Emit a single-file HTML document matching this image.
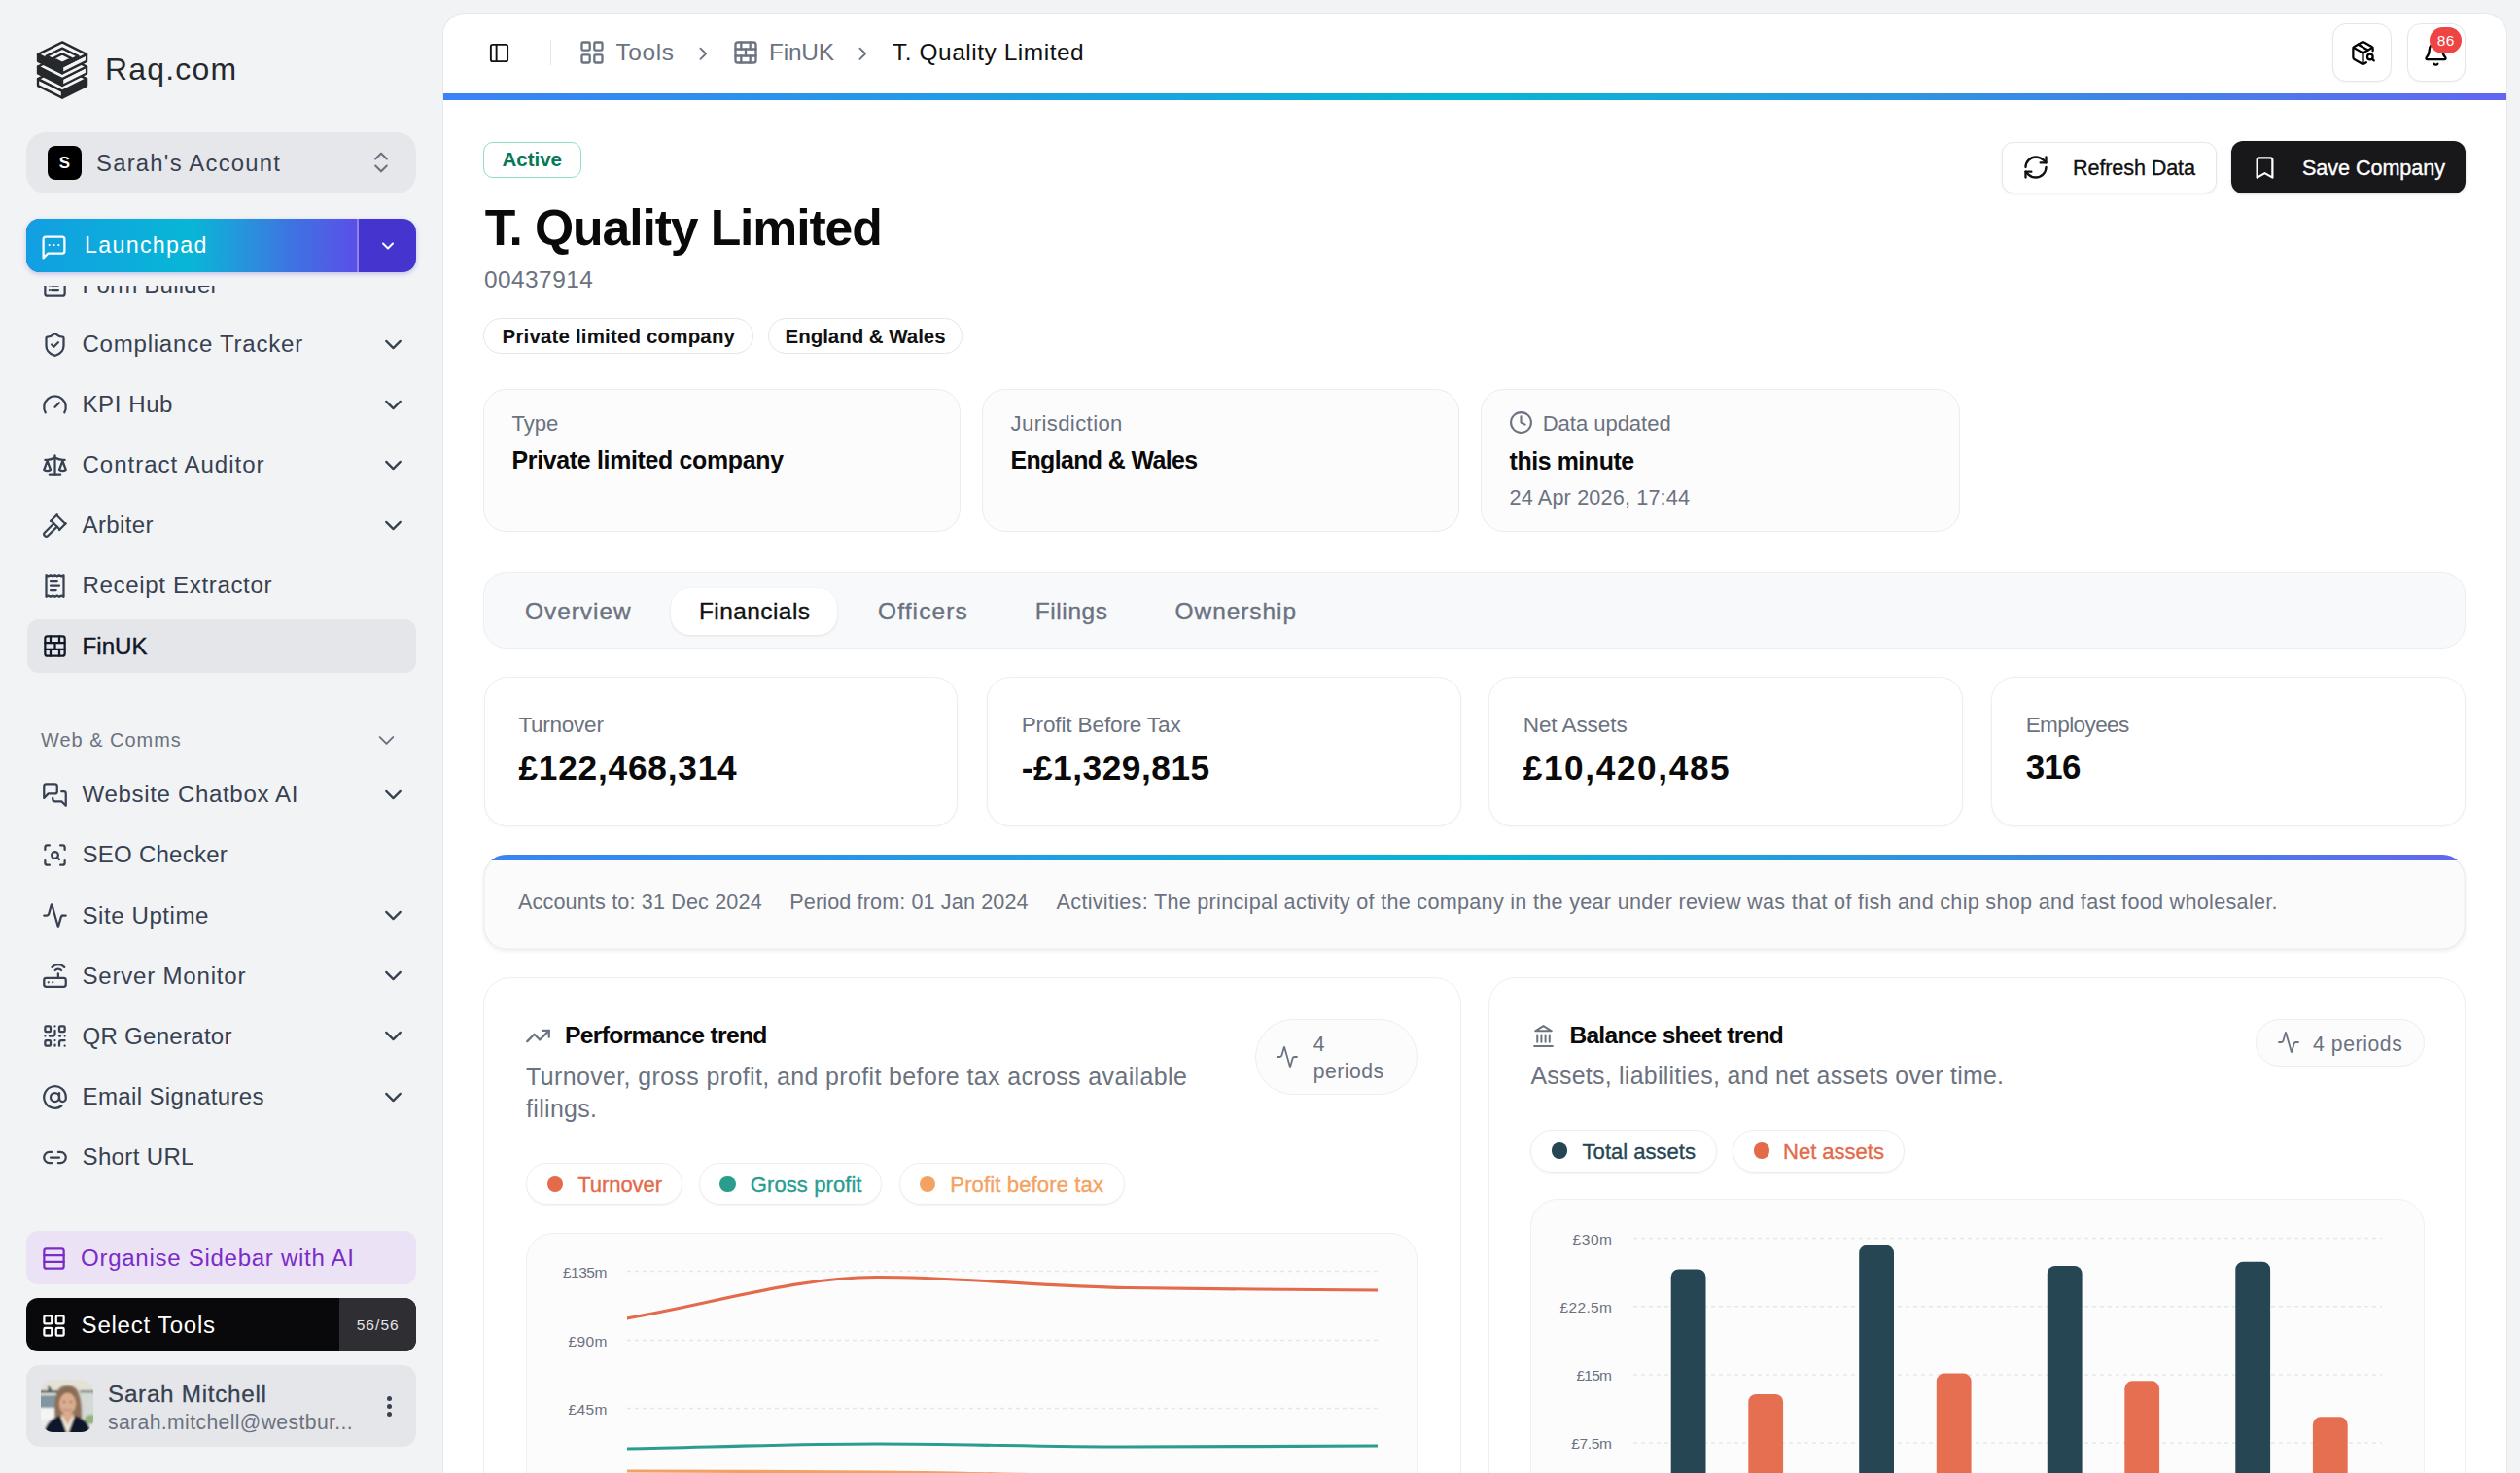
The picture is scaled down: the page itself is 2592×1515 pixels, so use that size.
<!DOCTYPE html>
<html><head><meta charset="utf-8"><style>
html,body{margin:0;padding:0;width:2592px;height:1515px;overflow:hidden;background:#f2f3f5;font-family:"Liberation Sans", sans-serif;}
body{position:relative;}

</style></head><body>
<svg style="position:absolute;left:30px;top:36px;" width="70" height="72" viewBox="0 0 70 72"><polygon points="8.999999999999996,45.099999999999994 34.05,57.599999999999994 34.05,64.6 8.999999999999996,52.099999999999994" fill="#f2f3f5" stroke="#25292c" stroke-width="2.3" stroke-linejoin="round"/><polygon points="34.05,57.599999999999994 59.099999999999994,45.099999999999994 59.099999999999994,52.099999999999994 34.05,64.6" fill="#25292c" stroke="#25292c" stroke-width="2.3" stroke-linejoin="round"/><polygon points="34.05,32.6 59.099999999999994,45.099999999999994 34.05,57.599999999999994 8.999999999999996,45.099999999999994" fill="#f2f3f5" stroke="#25292c" stroke-width="2.3" stroke-linejoin="round"/><polygon points="8.999999999999996,32.5 34.05,45.0 34.05,52.0 8.999999999999996,39.5" fill="#25292c" stroke="#25292c" stroke-width="2.3" stroke-linejoin="round"/><polygon points="34.05,45.0 59.099999999999994,32.5 59.099999999999994,39.5 34.05,52.0" fill="#f2f3f5" stroke="#25292c" stroke-width="2.3" stroke-linejoin="round"/><polygon points="34.05,20.0 59.099999999999994,32.5 34.05,45.0 8.999999999999996,32.5" fill="#f2f3f5" stroke="#25292c" stroke-width="2.3" stroke-linejoin="round"/><polygon points="8.999999999999996,19.9 34.05,32.4 34.05,39.4 8.999999999999996,26.9" fill="#25292c" stroke="#25292c" stroke-width="2.3" stroke-linejoin="round"/><polygon points="34.05,32.4 59.099999999999994,19.9 59.099999999999994,26.9 34.05,39.4" fill="#f2f3f5" stroke="#25292c" stroke-width="2.3" stroke-linejoin="round"/><polygon points="34.05,7.4 59.099999999999994,19.9 34.05,32.4 8.999999999999996,19.9" fill="#f2f3f5" stroke="#25292c" stroke-width="2.3" stroke-linejoin="round"/><polygon points="34.05,13.649999999999999 50.583,21.9 34.05,30.15 17.516999999999996,21.9" fill="none" stroke="#25292c" stroke-width="2.3" stroke-linejoin="round"/><polygon points="17.516999999999996,21.9 34.05,30.15 34.05,28.849999999999998 24.531,24.099999999999998" fill="#25292c" stroke="#25292c" stroke-width="1.5" stroke-linejoin="round"/><polygon points="34.05,19.349999999999998 43.568999999999996,24.099999999999998 34.05,28.849999999999998 24.531,24.099999999999998" fill="#f2f3f5" stroke="#25292c" stroke-width="2.3" stroke-linejoin="round"/></svg>
<div style="position:absolute;left:108.00px;top:55.64px;font-size:31.96px;line-height:31.96px;font-weight:400;color:#25292c;letter-spacing:1.190px;white-space:pre;">Raq.com</div>
<div style="position:absolute;left:27px;top:136px;width:401px;height:63px;background:#e6e7eb;border-radius:20px;"></div>
<div style="position:absolute;left:49px;top:150px;width:35px;height:35px;background:#000;border-radius:8px;"></div>
<div style="position:absolute;left:60.86px;top:159.67px;font-size:16.92px;line-height:16.92px;font-weight:700;color:#fff;letter-spacing:0.000px;white-space:pre;">S</div>
<div style="position:absolute;left:99.00px;top:155.78px;font-size:23.88px;line-height:23.88px;font-weight:400;color:#374151;letter-spacing:1.229px;white-space:pre;">Sarah&#39;s Account</div>
<svg style="position:absolute;left:378.00px;top:153.00px" width="28" height="28" viewBox="0 0 24 24" fill="none" stroke="#6b7280" stroke-width="1.8" stroke-linecap="round" stroke-linejoin="round"><path d="m7 15 5 5 5-5"/><path d="m7 9 5-5 5 5"/></svg>
<div style="position:absolute;left:27px;top:225px;width:401px;height:55px;border-radius:14px;overflow:hidden;background:#4535cf;box-shadow:0 2px 5px rgba(60,70,200,0.28);"><div style="position:absolute;left:0;top:0;width:340px;height:55px;background:linear-gradient(90deg,#129fe2 0%,#08b6d6 50%,#2596dc 65%,#3d74e2 80%,#5a4fe8 100%)"></div><div style="position:absolute;left:340px;top:0;width:1.5px;height:55px;background:rgba(255,255,255,0.4)"></div></div>
<svg style="position:absolute;left:41.00px;top:239.50px" width="29" height="29" viewBox="0 0 24 24" fill="none" stroke="#fff" stroke-width="1.9" stroke-linecap="round" stroke-linejoin="round"><path d="M21 15a2 2 0 0 1-2 2H7l-4 4V5a2 2 0 0 1 2-2h14a2 2 0 0 1 2 2z"/><path d="M8 10h.01"/><path d="M12 10h.01"/><path d="M16 10h.01"/></svg>
<div style="position:absolute;left:87.00px;top:241.34px;font-size:23.22px;line-height:23.22px;font-weight:400;color:#fff;letter-spacing:1.322px;white-space:pre;">Launchpad</div>
<svg style="position:absolute;left:389.00px;top:243.00px" width="20" height="20" viewBox="0 0 24 24" fill="none" stroke="#fff" stroke-width="2.4" stroke-linecap="round" stroke-linejoin="round"><path d="m6 9 6 6 6-6"/></svg>
<div style="position:absolute;left:0;top:293.5px;width:455px;height:936.5px;overflow:hidden">
<svg style="position:absolute;left:43.00px;top:-14.00px" width="27" height="27" viewBox="0 0 24 24" fill="none" stroke="#374151" stroke-width="2" stroke-linecap="round" stroke-linejoin="round"><rect width="18" height="18" x="3" y="3" rx="2"/><path d="M9 12h6"/><path d="M7 12h.01"/><path d="M7 16h.01"/><path d="M9 16h6"/></svg>
<div style="position:absolute;left:84.50px;top:-12.27px;font-size:24.06px;line-height:24.06px;font-weight:400;color:#374151;letter-spacing:0.214px;white-space:pre;">Form Builder</div>
<svg style="position:absolute;left:43.00px;top:47.00px" width="27" height="27" viewBox="0 0 24 24" fill="none" stroke="#374151" stroke-width="2" stroke-linecap="round" stroke-linejoin="round"><path d="M20 13c0 5-3.5 7.5-7.66 8.95a1 1 0 0 1-.67-.01C7.5 20.5 4 18 4 13V6a1 1 0 0 1 1-1c2 0 4.5-1.2 6.24-2.72a1.17 1.17 0 0 1 1.52 0C14.51 3.81 17 5 19 5a1 1 0 0 1 1 1z"/><path d="m9 12 2 2 4-4"/></svg>
<div style="position:absolute;left:84.50px;top:48.73px;font-size:24.06px;line-height:24.06px;font-weight:400;color:#374151;letter-spacing:0.757px;white-space:pre;">Compliance Tracker</div>
<svg style="position:absolute;left:390.00px;top:46.00px" width="29" height="29" viewBox="0 0 24 24" fill="none" stroke="#374151" stroke-width="1.9" stroke-linecap="round" stroke-linejoin="round"><path d="m6 9 6 6 6-6"/></svg>
<svg style="position:absolute;left:43.00px;top:109.00px" width="27" height="27" viewBox="0 0 24 24" fill="none" stroke="#374151" stroke-width="2" stroke-linecap="round" stroke-linejoin="round"><path d="m12 14 4-4"/><path d="M3.34 19a10 10 0 1 1 17.32 0"/></svg>
<div style="position:absolute;left:84.50px;top:110.73px;font-size:24.06px;line-height:24.06px;font-weight:400;color:#374151;letter-spacing:0.573px;white-space:pre;">KPI Hub</div>
<svg style="position:absolute;left:390.00px;top:108.00px" width="29" height="29" viewBox="0 0 24 24" fill="none" stroke="#374151" stroke-width="1.9" stroke-linecap="round" stroke-linejoin="round"><path d="m6 9 6 6 6-6"/></svg>
<svg style="position:absolute;left:43.00px;top:171.00px" width="27" height="27" viewBox="0 0 24 24" fill="none" stroke="#374151" stroke-width="2" stroke-linecap="round" stroke-linejoin="round"><path d="m16 16 3-8 3 8c-.87.65-1.92 1-3 1s-2.13-.35-3-1Z"/><path d="m2 16 3-8 3 8c-.87.65-1.92 1-3 1s-2.13-.35-3-1Z"/><path d="M7 21h10"/><path d="M12 3v18"/><path d="M3 7h2c2 0 5-1 7-2 2 1 5 2 7 2h2"/></svg>
<div style="position:absolute;left:84.50px;top:172.73px;font-size:24.06px;line-height:24.06px;font-weight:400;color:#374151;letter-spacing:0.971px;white-space:pre;">Contract Auditor</div>
<svg style="position:absolute;left:390.00px;top:170.00px" width="29" height="29" viewBox="0 0 24 24" fill="none" stroke="#374151" stroke-width="1.9" stroke-linecap="round" stroke-linejoin="round"><path d="m6 9 6 6 6-6"/></svg>
<svg style="position:absolute;left:43.00px;top:233.00px" width="27" height="27" viewBox="0 0 24 24" fill="none" stroke="#374151" stroke-width="2" stroke-linecap="round" stroke-linejoin="round"><path d="m14 13-8.381 8.38a1 1 0 0 1-3.001-3l8.384-8.381"/><path d="m16 16 6-6"/><path d="m21.5 10.5-8-8"/><path d="m8 8 6-6"/><path d="m8.5 7.5 8 8"/></svg>
<div style="position:absolute;left:84.50px;top:234.73px;font-size:24.06px;line-height:24.06px;font-weight:400;color:#374151;letter-spacing:0.362px;white-space:pre;">Arbiter</div>
<svg style="position:absolute;left:390.00px;top:232.00px" width="29" height="29" viewBox="0 0 24 24" fill="none" stroke="#374151" stroke-width="1.9" stroke-linecap="round" stroke-linejoin="round"><path d="m6 9 6 6 6-6"/></svg>
<svg style="position:absolute;left:43.00px;top:295.00px" width="27" height="27" viewBox="0 0 24 24" fill="none" stroke="#374151" stroke-width="2" stroke-linecap="round" stroke-linejoin="round"><path d="M4 2v20l2-1 2 1 2-1 2 1 2-1 2 1 2-1 2 1V2l-2 1-2-1-2 1-2-1-2 1-2-1-2 1Z"/><path d="M14 8H8"/><path d="M16 12H8"/><path d="M13 16H8"/></svg>
<div style="position:absolute;left:84.50px;top:296.73px;font-size:24.06px;line-height:24.06px;font-weight:400;color:#374151;letter-spacing:0.660px;white-space:pre;">Receipt Extractor</div>
<div style="position:absolute;left:27.5px;top:343.0px;width:400.5px;height:55px;background:#e5e6ea;border-radius:12px;"></div>
<svg style="position:absolute;left:43.00px;top:357.00px" width="27" height="27" viewBox="0 0 24 24" fill="none" stroke="#111827" stroke-width="2" stroke-linecap="round" stroke-linejoin="round"><rect width="18" height="18" x="3" y="3" rx="2"/><path d="M12 9v6"/><path d="M16 15v6"/><path d="M16 3v6"/><path d="M3 15h18"/><path d="M3 9h18"/><path d="M8 15v6"/><path d="M8 3v6"/></svg>
<div style="position:absolute;left:84.50px;top:359.73px;font-size:24.06px;line-height:24.06px;font-weight:400;color:#111827;letter-spacing:0.047px;white-space:pre;-webkit-text-stroke:0.4px currentColor;">FinUK</div>
<div style="position:absolute;left:42.00px;top:458.63px;font-size:19.93px;line-height:19.93px;font-weight:400;color:#6b7280;letter-spacing:1.012px;white-space:pre;">Web &amp; Comms</div>
<svg style="position:absolute;left:383.50px;top:454.50px" width="27" height="27" viewBox="0 0 24 24" fill="none" stroke="#6b7280" stroke-width="1.7" stroke-linecap="round" stroke-linejoin="round"><path d="m6 9 6 6 6-6"/></svg>
<svg style="position:absolute;left:43.00px;top:510.00px" width="27" height="27" viewBox="0 0 24 24" fill="none" stroke="#374151" stroke-width="2" stroke-linecap="round" stroke-linejoin="round"><path d="M14 9a2 2 0 0 1-2 2H6l-4 4V4a2 2 0 0 1 2-2h8a2 2 0 0 1 2 2z"/><path d="M18 9h2a2 2 0 0 1 2 2v11l-4-4h-6a2 2 0 0 1-2-2v-1"/></svg>
<div style="position:absolute;left:84.50px;top:511.73px;font-size:24.06px;line-height:24.06px;font-weight:400;color:#374151;letter-spacing:0.662px;white-space:pre;">Website Chatbox AI</div>
<svg style="position:absolute;left:390.00px;top:509.00px" width="29" height="29" viewBox="0 0 24 24" fill="none" stroke="#374151" stroke-width="1.9" stroke-linecap="round" stroke-linejoin="round"><path d="m6 9 6 6 6-6"/></svg>
<svg style="position:absolute;left:43.00px;top:572.20px" width="27" height="27" viewBox="0 0 24 24" fill="none" stroke="#374151" stroke-width="2" stroke-linecap="round" stroke-linejoin="round"><path d="M3 7V5a2 2 0 0 1 2-2h2"/><path d="M17 3h2a2 2 0 0 1 2 2v2"/><path d="M21 17v2a2 2 0 0 1-2 2h-2"/><path d="M7 21H5a2 2 0 0 1-2-2v-2"/><circle cx="12" cy="12" r="3"/><path d="m16 16-1.9-1.9"/></svg>
<div style="position:absolute;left:84.50px;top:573.93px;font-size:24.06px;line-height:24.06px;font-weight:400;color:#374151;letter-spacing:0.228px;white-space:pre;">SEO Checker</div>
<svg style="position:absolute;left:43.00px;top:634.40px" width="27" height="27" viewBox="0 0 24 24" fill="none" stroke="#374151" stroke-width="2" stroke-linecap="round" stroke-linejoin="round"><path d="M22 12h-2.48a2 2 0 0 0-1.93 1.46l-2.35 8.36a.25.25 0 0 1-.48 0L9.24 2.18a.25.25 0 0 0-.48 0l-2.35 8.36A2 2 0 0 1 4.49 12H2"/></svg>
<div style="position:absolute;left:84.50px;top:636.13px;font-size:24.06px;line-height:24.06px;font-weight:400;color:#374151;letter-spacing:0.570px;white-space:pre;">Site Uptime</div>
<svg style="position:absolute;left:390.00px;top:633.40px" width="29" height="29" viewBox="0 0 24 24" fill="none" stroke="#374151" stroke-width="1.9" stroke-linecap="round" stroke-linejoin="round"><path d="m6 9 6 6 6-6"/></svg>
<svg style="position:absolute;left:43.00px;top:696.60px" width="27" height="27" viewBox="0 0 24 24" fill="none" stroke="#374151" stroke-width="2" stroke-linecap="round" stroke-linejoin="round"><rect width="20" height="8" x="2" y="14" rx="2"/><path d="M6.01 18H6"/><path d="M10.01 18H10"/><path d="M15 10v4"/><path d="M17.84 7.17a4 4 0 0 0-5.66 0"/><path d="M20.66 4.34a8 8 0 0 0-11.31 0"/></svg>
<div style="position:absolute;left:84.50px;top:698.33px;font-size:24.06px;line-height:24.06px;font-weight:400;color:#374151;letter-spacing:0.792px;white-space:pre;">Server Monitor</div>
<svg style="position:absolute;left:390.00px;top:695.60px" width="29" height="29" viewBox="0 0 24 24" fill="none" stroke="#374151" stroke-width="1.9" stroke-linecap="round" stroke-linejoin="round"><path d="m6 9 6 6 6-6"/></svg>
<svg style="position:absolute;left:43.00px;top:758.80px" width="27" height="27" viewBox="0 0 24 24" fill="none" stroke="#374151" stroke-width="2" stroke-linecap="round" stroke-linejoin="round"><rect width="5" height="5" x="3" y="3" rx="1"/><rect width="5" height="5" x="16" y="3" rx="1"/><rect width="5" height="5" x="3" y="16" rx="1"/><path d="M21 16h-3a2 2 0 0 0-2 2v3"/><path d="M21 21v.01"/><path d="M12 7v3a2 2 0 0 1-2 2H7"/><path d="M3 12h.01"/><path d="M12 3h.01"/><path d="M12 16v.01"/><path d="M16 12h1"/><path d="M21 12v.01"/><path d="M12 21v-1"/></svg>
<div style="position:absolute;left:84.50px;top:760.53px;font-size:24.06px;line-height:24.06px;font-weight:400;color:#374151;letter-spacing:0.270px;white-space:pre;">QR Generator</div>
<svg style="position:absolute;left:390.00px;top:757.80px" width="29" height="29" viewBox="0 0 24 24" fill="none" stroke="#374151" stroke-width="1.9" stroke-linecap="round" stroke-linejoin="round"><path d="m6 9 6 6 6-6"/></svg>
<svg style="position:absolute;left:43.00px;top:821.00px" width="27" height="27" viewBox="0 0 24 24" fill="none" stroke="#374151" stroke-width="2" stroke-linecap="round" stroke-linejoin="round"><circle cx="12" cy="12" r="4"/><path d="M16 8v5a3 3 0 0 0 6 0v-1a10 10 0 1 0-4 8"/></svg>
<div style="position:absolute;left:84.50px;top:822.73px;font-size:24.06px;line-height:24.06px;font-weight:400;color:#374151;letter-spacing:0.348px;white-space:pre;">Email Signatures</div>
<svg style="position:absolute;left:390.00px;top:820.00px" width="29" height="29" viewBox="0 0 24 24" fill="none" stroke="#374151" stroke-width="1.9" stroke-linecap="round" stroke-linejoin="round"><path d="m6 9 6 6 6-6"/></svg>
<svg style="position:absolute;left:43.00px;top:883.20px" width="27" height="27" viewBox="0 0 24 24" fill="none" stroke="#374151" stroke-width="2" stroke-linecap="round" stroke-linejoin="round"><path d="M9 17H7A5 5 0 0 1 7 7h2"/><path d="M15 7h2a5 5 0 1 1 0 10h-2"/><line x1="8" x2="16" y1="12" y2="12"/></svg>
<div style="position:absolute;left:84.50px;top:884.93px;font-size:24.06px;line-height:24.06px;font-weight:400;color:#374151;letter-spacing:0.342px;white-space:pre;">Short URL</div>
</div>
<div style="position:absolute;left:27px;top:1266px;width:401px;height:55px;background:#ebe2f6;border-radius:12px;"></div>
<svg style="position:absolute;left:42.00px;top:1281.00px" width="27" height="27" viewBox="0 0 24 24" fill="none" stroke="#7b2cc8" stroke-width="2" stroke-linecap="round" stroke-linejoin="round"><rect width="18" height="18" x="3" y="3" rx="2"/><path d="M21 9H3"/><path d="M21 15H3"/></svg>
<div style="position:absolute;left:83.00px;top:1281.93px;font-size:24.06px;line-height:24.06px;font-weight:400;color:#7b2cc8;letter-spacing:0.711px;white-space:pre;">Organise Sidebar with AI</div>
<div style="position:absolute;left:27px;top:1335px;width:401px;height:55px;background:#09090b;border-radius:12px;overflow:hidden;"><div style="position:absolute;left:322px;top:0;width:79px;height:55px;background:#2e2e33"></div></div>
<svg style="position:absolute;left:42.00px;top:1350.00px" width="27" height="27" viewBox="0 0 24 24" fill="none" stroke="#fff" stroke-width="2" stroke-linecap="round" stroke-linejoin="round"><rect width="7" height="7" x="3" y="3" rx="1"/><rect width="7" height="7" x="14" y="3" rx="1"/><rect width="7" height="7" x="14" y="14" rx="1"/><rect width="7" height="7" x="3" y="14" rx="1"/></svg>
<div style="position:absolute;left:83.60px;top:1350.93px;font-size:24.06px;line-height:24.06px;font-weight:400;color:#fff;letter-spacing:0.744px;white-space:pre;">Select Tools</div>
<div style="position:absolute;left:366.70px;top:1354.57px;font-size:15.51px;line-height:15.51px;font-weight:400;color:#e4e4e7;letter-spacing:1.051px;white-space:pre;">56/56</div>
<div style="position:absolute;left:27px;top:1404px;width:401px;height:84px;background:#e5e6ea;border-radius:14px;"></div>
<svg style="position:absolute;left:42px;top:1419px;" width="54" height="54" viewBox="0 0 54 54"><defs><clipPath id="avc"><rect x="0" y="0" width="54" height="54" rx="12.5"/></clipPath><filter id="avb" x="-10%" y="-10%" width="120%" height="120%"><feGaussianBlur stdDeviation="0.9"/></filter></defs>
<g clip-path="url(#avc)"><g filter="url(#avb)">
<rect x="-2" y="-2" width="58" height="58" fill="#e9ece9"/>
<rect x="-2" y="-2" width="58" height="14" fill="#e4e2d8"/>
<rect x="-2" y="11" width="20" height="3" fill="#5e625c"/>
<rect x="40" y="11" width="16" height="2.5" fill="#7d837d"/>
<rect x="-2" y="16" width="18" height="13" fill="#8197a0"/>
<rect x="-2" y="29" width="18" height="12" fill="#f4f5f3"/>
<rect x="40" y="14" width="16" height="26" fill="#d3d9d4"/>
<ellipse cx="52" cy="41" rx="7" ry="5" fill="#93b47c"/>
<path d="M7 6 L10 8 L11 12 L8 12Z" fill="#333"/>
<path d="M15 42 C13 30 14 12 20 8 C24 5 31 5 35 8 C41 12 43 28 42 44 L37 46 L18 46Z" fill="#8d7158"/>
<ellipse cx="27.5" cy="24.5" rx="8.6" ry="11" fill="#dcae8f"/>
<path d="M19 22 C19 12 23 9 27.5 9 C33 9 36 13 36 22 C34 15 31 13.5 27.5 13.5 C23 13.5 21 16 19 22Z" fill="#866a52"/>
<path d="M23.5 30 C25.5 32 29.5 32 31.5 30" stroke="#b57b6c" stroke-width="1.2" fill="none"/>
<path d="M21 35 L34 35 L35 54 L20 54Z" fill="#d9ab8c"/>
<path d="M19 38 L36 38 L34 56 L21 56Z" fill="#efe8dc"/><path d="M22.5 37 L32.5 37 L27.5 47Z" fill="#d9ab8c"/><ellipse cx="24" cy="23" rx="1.3" ry="0.9" fill="#7a5646"/><ellipse cx="31" cy="23" rx="1.3" ry="0.9" fill="#7a5646"/>
<path d="M3 56 C5 44 12 39 20 37 L27 56 Z" fill="#111729"/>
<path d="M52 56 C50 44 43 39 35 37 L28 56 Z" fill="#111729"/>
</g></g></svg>
<div style="position:absolute;left:111.00px;top:1422.47px;font-size:24.25px;line-height:24.25px;font-weight:400;color:#374151;letter-spacing:0.719px;white-space:pre;-webkit-text-stroke:0.3px currentColor;">Sarah Mitchell</div>
<div style="position:absolute;left:111.00px;top:1452.39px;font-size:21.15px;line-height:21.15px;font-weight:400;color:#6b7280;letter-spacing:0.389px;white-space:pre;">sarah.mitchell@westbur...</div>
<div style="position:absolute;left:398px;top:1436px;width:5px;height:5px;background:#374151;border-radius:50%;"></div>
<div style="position:absolute;left:398px;top:1444px;width:5px;height:5px;background:#374151;border-radius:50%;"></div>
<div style="position:absolute;left:398px;top:1452px;width:5px;height:5px;background:#374151;border-radius:50%;"></div>
<div style="position:absolute;left:456px;top:13.5px;width:2122px;height:1560px;background:#fff;border-radius:22px;box-shadow:0 0 0 1px #e7e8eb;"></div>
<svg style="position:absolute;left:502.00px;top:43.00px" width="23" height="23" viewBox="0 0 24 24" fill="none" stroke="#111" stroke-width="2" stroke-linecap="round" stroke-linejoin="round"><rect width="18" height="18" x="3" y="3" rx="2"/><path d="M9 3v18"/></svg>
<div style="position:absolute;left:565.5px;top:41px;width:1.5px;height:26px;background:#e5e7eb;"></div>
<svg style="position:absolute;left:595.00px;top:40.00px" width="28" height="28" viewBox="0 0 24 24" fill="none" stroke="#6b7280" stroke-width="2" stroke-linecap="round" stroke-linejoin="round"><rect width="7" height="7" x="3" y="3" rx="1"/><rect width="7" height="7" x="14" y="3" rx="1"/><rect width="7" height="7" x="14" y="14" rx="1"/><rect width="7" height="7" x="3" y="14" rx="1"/></svg>
<div style="position:absolute;left:633.50px;top:42.31px;font-size:24.44px;line-height:24.44px;font-weight:400;color:#6b7280;letter-spacing:0.609px;white-space:pre;">Tools</div>
<svg style="position:absolute;left:711.75px;top:43.75px" width="22.5" height="22.5" viewBox="0 0 24 24" fill="none" stroke="#6b7280" stroke-width="2" stroke-linecap="round" stroke-linejoin="round"><path d="m9 18 6-6-6-6"/></svg>
<svg style="position:absolute;left:752.50px;top:40.00px" width="28" height="28" viewBox="0 0 24 24" fill="none" stroke="#6b7280" stroke-width="2" stroke-linecap="round" stroke-linejoin="round"><rect width="18" height="18" x="3" y="3" rx="2"/><path d="M12 9v6"/><path d="M16 15v6"/><path d="M16 3v6"/><path d="M3 15h18"/><path d="M3 9h18"/><path d="M8 15v6"/><path d="M8 3v6"/></svg>
<div style="position:absolute;left:791.00px;top:42.31px;font-size:24.44px;line-height:24.44px;font-weight:400;color:#6b7280;letter-spacing:-0.227px;white-space:pre;">FinUK</div>
<svg style="position:absolute;left:876.45px;top:43.75px" width="22.5" height="22.5" viewBox="0 0 24 24" fill="none" stroke="#6b7280" stroke-width="2" stroke-linecap="round" stroke-linejoin="round"><path d="m9 18 6-6-6-6"/></svg>
<div style="position:absolute;left:918.00px;top:42.31px;font-size:24.44px;line-height:24.44px;font-weight:400;color:#111;letter-spacing:0.546px;white-space:pre;">T. Quality Limited</div>
<div style="position:absolute;left:2399.3px;top:24.3px;width:60.5px;height:60.2px;box-sizing:border-box;border:1.5px solid #e4e6ea;border-radius:14px;background:#fff;box-shadow:0 1px 2px rgba(0,0,0,0.04);"></div>
<div style="position:absolute;left:2475.5px;top:24.3px;width:60.5px;height:60.2px;box-sizing:border-box;border:1.5px solid #e4e6ea;border-radius:14px;background:#fff;box-shadow:0 1px 2px rgba(0,0,0,0.04);"></div>
<svg style="position:absolute;left:2417.00px;top:41.00px" width="27" height="27" viewBox="0 0 24 24" fill="none" stroke="#000" stroke-width="2" stroke-linecap="round" stroke-linejoin="round"><path d="M21 10V8a2 2 0 0 0-1-1.73l-7-4a2 2 0 0 0-2 0l-7 4A2 2 0 0 0 3 8v8a2 2 0 0 0 1 1.73l7 4a2 2 0 0 0 2 0l2-1.14"/><path d="m7.5 4.27 9 5.15"/><polyline points="3.29 7 12 12 20.71 7"/><line x1="12" x2="12" y1="22" y2="12"/><circle cx="18.5" cy="15.5" r="2.5"/><path d="M20.27 17.27 22 19"/></svg>
<svg style="position:absolute;left:2491.90px;top:41.50px" width="27" height="27" viewBox="0 0 24 24" fill="none" stroke="#000" stroke-width="2" stroke-linecap="round" stroke-linejoin="round"><path d="M10.268 21a2 2 0 0 0 3.464 0"/><path d="M3.262 15.326A1 1 0 0 0 4 17h16a1 1 0 0 0 .74-1.673C19.41 13.956 18 12.499 18 8A6 6 0 0 0 6 8c0 4.499-1.411 5.956-2.738 7.326"/></svg>
<div style="position:absolute;left:2499.0px;top:28.199999999999996px;width:32.8px;height:27.2px;background:#ef4444;border-radius:14px;"></div>
<div style="position:absolute;left:2506.75px;top:34.47px;font-size:15.51px;line-height:15.51px;font-weight:400;color:#fff;letter-spacing:0.450px;white-space:pre;">86</div>
<div style="position:absolute;left:456px;top:96px;width:2122px;height:7px;background:linear-gradient(90deg,#3b82f6 0%,#06b6d4 50%,#6366f1 100%);"></div>
<div style="position:absolute;left:497px;top:145.7px;width:101px;height:37px;box-sizing:border-box;border:1.7px solid #8ee0c0;border-radius:10px;background:#fff;"></div>
<div style="position:absolute;left:516.60px;top:153.65px;font-size:20.49px;line-height:20.49px;font-weight:700;color:#047857;letter-spacing:-0.017px;white-space:pre;">Active</div>
<div style="position:absolute;left:498.75px;top:208.53px;font-size:51.7px;line-height:51.7px;font-weight:700;color:#0a0a0a;letter-spacing:-1.113px;white-space:pre;">T. Quality Limited</div>
<div style="position:absolute;left:497.90px;top:276.31px;font-size:24.44px;line-height:24.44px;font-weight:400;color:#6b7280;letter-spacing:0.467px;white-space:pre;">00437914</div>
<div style="position:absolute;left:497px;top:327px;width:277.6px;height:37px;box-sizing:border-box;border:1.5px solid #e3e5e9;border-radius:19px;"></div>
<div style="position:absolute;left:516.60px;top:335.65px;font-size:20.49px;line-height:20.49px;font-weight:700;color:#111;letter-spacing:0.170px;white-space:pre;">Private limited company</div>
<div style="position:absolute;left:789.8px;top:327px;width:200.7px;height:37px;box-sizing:border-box;border:1.5px solid #e3e5e9;border-radius:19px;"></div>
<div style="position:absolute;left:807.60px;top:335.65px;font-size:20.49px;line-height:20.49px;font-weight:700;color:#111;letter-spacing:-0.030px;white-space:pre;">England &amp; Wales</div>
<div style="position:absolute;left:2058.7px;top:145.5px;width:221.3px;height:53px;box-sizing:border-box;border:1.5px solid #e4e6ea;border-radius:12px;background:#fff;box-shadow:0 1px 3px rgba(0,0,0,0.06);"></div>
<svg style="position:absolute;left:2080.30px;top:158.30px" width="28" height="28" viewBox="0 0 24 24" fill="none" stroke="#111" stroke-width="2" stroke-linecap="round" stroke-linejoin="round"><path d="M3 12a9 9 0 0 1 9-9 9.75 9.75 0 0 1 6.74 2.74L21 8"/><path d="M21 3v5h-5"/><path d="M21 12a9 9 0 0 1-9 9 9.75 9.75 0 0 1-6.74-2.74L3 16"/><path d="M8 16H3v5"/></svg>
<div style="position:absolute;left:2132.00px;top:162.09px;font-size:21.62px;line-height:21.62px;font-weight:400;color:#111;letter-spacing:-0.121px;white-space:pre;-webkit-text-stroke:0.35px currentColor;">Refresh Data</div>
<div style="position:absolute;left:2294.8px;top:145px;width:241.7px;height:54px;border-radius:12px;background:#18181b;box-shadow:0 1px 3px rgba(0,0,0,0.15);"></div>
<svg style="position:absolute;left:2316.00px;top:158.50px" width="27" height="27" viewBox="0 0 24 24" fill="none" stroke="#fff" stroke-width="2" stroke-linecap="round" stroke-linejoin="round"><path d="m19 21-7-4-7 4V5a2 2 0 0 1 2-2h10a2 2 0 0 1 2 2v16z"/></svg>
<div style="position:absolute;left:2368.00px;top:162.09px;font-size:21.62px;line-height:21.62px;font-weight:400;color:#fff;letter-spacing:-0.068px;white-space:pre;-webkit-text-stroke:0.35px currentColor;">Save Company</div>
<div style="position:absolute;left:497px;top:399.5px;width:491px;height:147px;box-sizing:border-box;border:1.5px solid #eaecef;border-radius:24px;background:#fcfcfd;"></div>
<div style="position:absolute;left:526.50px;top:425.30px;font-size:22.09px;line-height:22.09px;font-weight:400;color:#6b7280;letter-spacing:-0.025px;white-space:pre;">Type</div>
<div style="position:absolute;left:526.50px;top:461.41px;font-size:24.91px;line-height:24.91px;font-weight:700;color:#0a0a0a;letter-spacing:-0.320px;white-space:pre;">Private limited company</div>
<div style="position:absolute;left:1010px;top:399.5px;width:491px;height:147px;box-sizing:border-box;border:1.5px solid #eaecef;border-radius:24px;background:#fcfcfd;"></div>
<div style="position:absolute;left:1039.50px;top:425.30px;font-size:22.09px;line-height:22.09px;font-weight:400;color:#6b7280;letter-spacing:0.406px;white-space:pre;">Jurisdiction</div>
<div style="position:absolute;left:1039.50px;top:461.41px;font-size:24.91px;line-height:24.91px;font-weight:700;color:#0a0a0a;letter-spacing:-0.609px;white-space:pre;">England &amp; Wales</div>
<div style="position:absolute;left:1523px;top:399.5px;width:492.7px;height:147px;box-sizing:border-box;border:1.5px solid #eaecef;border-radius:24px;background:#fcfcfd;"></div>
<svg style="position:absolute;left:1551.80px;top:422.00px" width="25" height="25" viewBox="0 0 24 24" fill="none" stroke="#6b7280" stroke-width="2" stroke-linecap="round" stroke-linejoin="round"><circle cx="12" cy="12" r="10"/><polyline points="12 6 12 12 16 14"/></svg>
<div style="position:absolute;left:1586.70px;top:425.30px;font-size:22.09px;line-height:22.09px;font-weight:400;color:#6b7280;letter-spacing:-0.053px;white-space:pre;">Data updated</div>
<div style="position:absolute;left:1552.50px;top:461.91px;font-size:24.91px;line-height:24.91px;font-weight:700;color:#0a0a0a;letter-spacing:-0.414px;white-space:pre;">this minute</div>
<div style="position:absolute;left:1552.50px;top:501.19px;font-size:21.62px;line-height:21.62px;font-weight:400;color:#6b7280;letter-spacing:0.168px;white-space:pre;">24 Apr 2026, 17:44</div>
<div style="position:absolute;left:497px;top:588px;width:2039px;height:79px;box-sizing:border-box;border:1.5px solid #eceef2;border-radius:24px;background:#f8f9fb;"></div>
<div style="position:absolute;left:690px;top:604.5px;width:170.7px;height:48.2px;border-radius:20px;background:#fff;box-shadow:0 1px 3px rgba(0,0,0,0.10);"></div>
<div style="position:absolute;left:540.00px;top:617.11px;font-size:24.44px;line-height:24.44px;font-weight:400;color:#6b7280;letter-spacing:0.965px;white-space:pre;-webkit-text-stroke:0.35px currentColor;">Overview</div>
<div style="position:absolute;left:719.00px;top:617.11px;font-size:24.44px;line-height:24.44px;font-weight:400;color:#111;letter-spacing:0.441px;white-space:pre;-webkit-text-stroke:0.35px currentColor;">Financials</div>
<div style="position:absolute;left:903.00px;top:617.11px;font-size:24.44px;line-height:24.44px;font-weight:400;color:#6b7280;letter-spacing:1.150px;white-space:pre;-webkit-text-stroke:0.35px currentColor;">Officers</div>
<div style="position:absolute;left:1064.80px;top:617.11px;font-size:24.44px;line-height:24.44px;font-weight:400;color:#6b7280;letter-spacing:0.596px;white-space:pre;-webkit-text-stroke:0.35px currentColor;">Filings</div>
<div style="position:absolute;left:1208.60px;top:617.11px;font-size:24.44px;line-height:24.44px;font-weight:400;color:#6b7280;letter-spacing:0.961px;white-space:pre;-webkit-text-stroke:0.35px currentColor;">Ownership</div>
<div style="position:absolute;left:497.7px;top:695.6px;width:487.7px;height:154px;box-sizing:border-box;border:1.5px solid #eceef2;border-radius:24px;background:#fff;box-shadow:0 1px 3px rgba(0,0,0,0.04);"></div>
<div style="position:absolute;left:533.40px;top:734.50px;font-size:22.56px;line-height:22.56px;font-weight:400;color:#6b7280;letter-spacing:-0.270px;white-space:pre;">Turnover</div>
<div style="position:absolute;left:533.40px;top:772.15px;font-size:35.25px;line-height:35.25px;font-weight:700;color:#0a0a0a;letter-spacing:0.787px;white-space:pre;">£122,468,314</div>
<div style="position:absolute;left:1015px;top:695.6px;width:487.7px;height:154px;box-sizing:border-box;border:1.5px solid #eceef2;border-radius:24px;background:#fff;box-shadow:0 1px 3px rgba(0,0,0,0.04);"></div>
<div style="position:absolute;left:1050.70px;top:734.50px;font-size:22.56px;line-height:22.56px;font-weight:400;color:#6b7280;letter-spacing:-0.142px;white-space:pre;">Profit Before Tax</div>
<div style="position:absolute;left:1050.70px;top:772.15px;font-size:35.25px;line-height:35.25px;font-weight:700;color:#0a0a0a;letter-spacing:0.533px;white-space:pre;">-£1,329,815</div>
<div style="position:absolute;left:1531px;top:695.6px;width:487.7px;height:154px;box-sizing:border-box;border:1.5px solid #eceef2;border-radius:24px;background:#fff;box-shadow:0 1px 3px rgba(0,0,0,0.04);"></div>
<div style="position:absolute;left:1566.70px;top:734.50px;font-size:22.56px;line-height:22.56px;font-weight:400;color:#6b7280;letter-spacing:-0.087px;white-space:pre;">Net Assets</div>
<div style="position:absolute;left:1566.70px;top:772.15px;font-size:35.25px;line-height:35.25px;font-weight:700;color:#0a0a0a;letter-spacing:1.597px;white-space:pre;">£10,420,485</div>
<div style="position:absolute;left:2048px;top:695.6px;width:487.7px;height:154px;box-sizing:border-box;border:1.5px solid #eceef2;border-radius:24px;background:#fff;box-shadow:0 1px 3px rgba(0,0,0,0.04);"></div>
<div style="position:absolute;left:2083.70px;top:734.50px;font-size:22.56px;line-height:22.56px;font-weight:400;color:#6b7280;letter-spacing:-0.618px;white-space:pre;">Employees</div>
<div style="position:absolute;left:2083.70px;top:772.47px;font-size:34.87362549800796px;line-height:34.87362549800796px;font-weight:700;color:#0a0a0a;letter-spacing:-0.700px;white-space:pre;">316</div>
<div style="position:absolute;left:497px;top:878.9px;width:2039px;height:97.8px;border-radius:24px;background:#fbfbfc;box-shadow:0 0 0 1.5px #eceef2 inset,0 2px 4px rgba(0,0,0,0.06);overflow:hidden;"><div style="position:absolute;left:0;top:0;right:0;height:6px;background:linear-gradient(90deg,#3b82f6 0%,#06b6d4 50%,#6366f1 100%)"></div></div>
<div style="position:absolute;left:533.00px;top:917.09px;font-size:21.62px;line-height:21.62px;font-weight:400;color:#6b7280;letter-spacing:0.140px;white-space:pre;">Accounts to: 31 Dec 2024</div>
<div style="position:absolute;left:812.30px;top:917.09px;font-size:21.62px;line-height:21.62px;font-weight:400;color:#6b7280;letter-spacing:0.115px;white-space:pre;">Period from: 01 Jan 2024</div>
<div style="position:absolute;left:1086.60px;top:917.09px;font-size:21.62px;line-height:21.62px;font-weight:400;color:#6b7280;letter-spacing:0.286px;white-space:pre;">Activities: The principal activity of the company in the year under review was that of fish and chip shop and fast food wholesaler.</div>
<div style="position:absolute;left:497.3px;top:1005px;width:1005.4px;height:600px;box-sizing:border-box;border:1.5px solid #eceef2;border-radius:28px;background:#fff;"></div>
<div style="position:absolute;left:1530.6px;top:1005px;width:1005.1px;height:600px;box-sizing:border-box;border:1.5px solid #eceef2;border-radius:28px;background:#fff;"></div>
<svg style="position:absolute;left:540.30px;top:1052.20px" width="27" height="27" viewBox="0 0 24 24" fill="none" stroke="#6b7280" stroke-width="2" stroke-linecap="round" stroke-linejoin="round"><polyline points="22 7 13.5 15.5 8.5 10.5 2 17"/><polyline points="16 7 22 7 22 13"/></svg>
<div style="position:absolute;left:581.00px;top:1052.58px;font-size:24.71351135734072px;line-height:24.71351135734072px;font-weight:700;color:#0a0a0a;letter-spacing:-0.700px;white-space:pre;">Performance trend</div>
<div style="position:absolute;left:541.00px;top:1094.51px;font-size:24.91px;line-height:24.91px;font-weight:400;color:#6b7280;letter-spacing:0.402px;white-space:pre;">Turnover, gross profit, and profit before tax across available</div>
<div style="position:absolute;left:541.00px;top:1128.31px;font-size:24.91px;line-height:24.91px;font-weight:400;color:#6b7280;letter-spacing:0.342px;white-space:pre;">filings.</div>
<div style="position:absolute;left:1291px;top:1047.5px;width:167px;height:78.5px;box-sizing:border-box;border:1.5px solid #eceef2;border-radius:40px;background:#fcfcfd;"></div>
<svg style="position:absolute;left:1312.00px;top:1075.00px" width="24" height="24" viewBox="0 0 24 24" fill="none" stroke="#6b7280" stroke-width="1.8" stroke-linecap="round" stroke-linejoin="round"><path d="M22 12h-2.48a2 2 0 0 0-1.93 1.46l-2.35 8.36a.25.25 0 0 1-.48 0L9.24 2.18a.25.25 0 0 0-.48 0l-2.35 8.36A2 2 0 0 1 4.49 12H2"/></svg>
<div style="position:absolute;left:1350.80px;top:1062.59px;font-size:21.15px;line-height:21.15px;font-weight:400;color:#6b7280;letter-spacing:0.000px;white-space:pre;">4</div>
<div style="position:absolute;left:1350.80px;top:1091.49px;font-size:21.15px;line-height:21.15px;font-weight:400;color:#6b7280;letter-spacing:0.476px;white-space:pre;">periods</div>
<div style="position:absolute;left:541px;top:1196px;width:161px;height:43.4px;box-sizing:border-box;border:1.5px solid #eceef2;border-radius:22px;background:#fff;box-shadow:0 1px 2px rgba(0,0,0,0.05);"></div>
<div style="position:absolute;left:562.5px;top:1209.7px;width:16.6px;height:16.6px;background:#e36a4a;border-radius:50%;"></div>
<div style="position:absolute;left:594.30px;top:1208.30px;font-size:22.09px;line-height:22.09px;font-weight:400;color:#e36a4a;letter-spacing:-0.119px;white-space:pre;-webkit-text-stroke:0.35px currentColor;">Turnover</div>
<div style="position:absolute;left:719.4px;top:1196px;width:187.60000000000002px;height:43.4px;box-sizing:border-box;border:1.5px solid #eceef2;border-radius:22px;background:#fff;box-shadow:0 1px 2px rgba(0,0,0,0.05);"></div>
<div style="position:absolute;left:740.0px;top:1209.7px;width:16.6px;height:16.6px;background:#2a9d8f;border-radius:50%;"></div>
<div style="position:absolute;left:771.80px;top:1208.30px;font-size:22.09px;line-height:22.09px;font-weight:400;color:#2a9d8f;letter-spacing:0.054px;white-space:pre;-webkit-text-stroke:0.35px currentColor;">Gross profit</div>
<div style="position:absolute;left:925px;top:1196px;width:231.79999999999995px;height:43.4px;box-sizing:border-box;border:1.5px solid #eceef2;border-radius:22px;background:#fff;box-shadow:0 1px 2px rgba(0,0,0,0.05);"></div>
<div style="position:absolute;left:945.5px;top:1209.7px;width:16.6px;height:16.6px;background:#f4a261;border-radius:50%;"></div>
<div style="position:absolute;left:977.30px;top:1208.30px;font-size:22.09px;line-height:22.09px;font-weight:400;color:#f4a261;letter-spacing:0.115px;white-space:pre;-webkit-text-stroke:0.35px currentColor;">Profit before tax</div>
<div style="position:absolute;left:541px;top:1268px;width:917px;height:400px;box-sizing:border-box;border:1.5px solid #eef0f3;border-radius:28px;background:#fcfcfd;"></div>
<div style="position:absolute;left:579.00px;top:1300.57px;font-size:15.51px;line-height:15.51px;font-weight:400;color:#6b7280;letter-spacing:-0.502px;white-space:pre;">£135m</div>
<div style="position:absolute;left:584.40px;top:1371.57px;font-size:15.51px;line-height:15.51px;font-weight:400;color:#6b7280;letter-spacing:0.406px;white-space:pre;">£90m</div>
<div style="position:absolute;left:584.40px;top:1441.67px;font-size:15.51px;line-height:15.51px;font-weight:400;color:#6b7280;letter-spacing:0.406px;white-space:pre;">£45m</div>
<div style="position:absolute;left:607.15px;top:1512.07px;font-size:15.51px;line-height:15.51px;font-weight:400;color:#6b7280;letter-spacing:0.000px;white-space:pre;">£0</div>
<svg style="position:absolute;left:645px;top:1268px;" width="772" height="260" viewBox="0 0 772 260"><line x1="0" x2="772" y1="39.5" y2="39.5" stroke="#e5e7eb" stroke-width="1.5" stroke-dasharray="4 4"/><line x1="0" x2="772" y1="110.5" y2="110.5" stroke="#e5e7eb" stroke-width="1.5" stroke-dasharray="4 4"/><line x1="0" x2="772" y1="180.5999999999999" y2="180.5999999999999" stroke="#e5e7eb" stroke-width="1.5" stroke-dasharray="4 4"/><path d="M0,87.79999999999995 C85.8,73.7 171.5,45.5 257.3,45.5 C343.1,45.5 428.9,55.1 514.7,56.5 C600.5,57.9 686.2,58.2 772,59" fill="none" stroke="#e36a4a" stroke-width="3.2" stroke-linecap="round"/><path d="M0,222 C85.8,220.3 171.5,217.0 257.3,217 C343.1,217.0 428.9,220.0 514.7,220 C600.5,220.0 686.2,219.3 772,219" fill="none" stroke="#2a9d8f" stroke-width="3.2" stroke-linecap="round"/><path d="M0,245 C85.8,245.3 171.5,245.5 257.3,246 C343.1,246.5 428.9,249.5 514.7,250 C600.5,250.5 686.2,250.7 772,251" fill="none" stroke="#f4a261" stroke-width="3.2" stroke-linecap="round"/></svg>
<svg style="position:absolute;left:1574.90px;top:1052.70px" width="25" height="25" viewBox="0 0 24 24" fill="none" stroke="#6b7280" stroke-width="1.9" stroke-linecap="round" stroke-linejoin="round"><line x1="3" x2="21" y1="22" y2="22"/><line x1="6" x2="6" y1="18" y2="11"/><line x1="10" x2="10" y1="18" y2="11"/><line x1="14" x2="14" y1="18" y2="11"/><line x1="18" x2="18" y1="18" y2="11"/><polygon points="12 2 20 7 4 7"/></svg>
<div style="position:absolute;left:1614.40px;top:1052.84px;font-size:24.521612025398472px;line-height:24.521612025398472px;font-weight:700;color:#0a0a0a;letter-spacing:-0.700px;white-space:pre;">Balance sheet trend</div>
<div style="position:absolute;left:1574.40px;top:1093.71px;font-size:24.91px;line-height:24.91px;font-weight:400;color:#6b7280;letter-spacing:0.262px;white-space:pre;">Assets, liabilities, and net assets over time.</div>
<div style="position:absolute;left:2319.7px;top:1047.6px;width:174.3px;height:49.4px;box-sizing:border-box;border:1.5px solid #eceef2;border-radius:25px;background:#fcfcfd;"></div>
<svg style="position:absolute;left:2341.60px;top:1060.00px" width="24" height="24" viewBox="0 0 24 24" fill="none" stroke="#6b7280" stroke-width="1.8" stroke-linecap="round" stroke-linejoin="round"><path d="M22 12h-2.48a2 2 0 0 0-1.93 1.46l-2.35 8.36a.25.25 0 0 1-.48 0L9.24 2.18a.25.25 0 0 0-.48 0l-2.35 8.36A2 2 0 0 1 4.49 12H2"/></svg>
<div style="position:absolute;left:2379.00px;top:1062.89px;font-size:21.15px;line-height:21.15px;font-weight:400;color:#6b7280;letter-spacing:0.591px;white-space:pre;">4 periods</div>
<div style="position:absolute;left:1574.4px;top:1161.6px;width:191.5px;height:44.7px;box-sizing:border-box;border:1.5px solid #eceef2;border-radius:22px;background:#fff;box-shadow:0 1px 2px rgba(0,0,0,0.05);"></div>
<div style="position:absolute;left:1595.9px;top:1175.4px;width:16.6px;height:16.6px;background:#264653;border-radius:50%;"></div>
<div style="position:absolute;left:1627.60px;top:1173.60px;font-size:22.09px;line-height:22.09px;font-weight:400;color:#264653;letter-spacing:-0.016px;white-space:pre;-webkit-text-stroke:0.35px currentColor;">Total assets</div>
<div style="position:absolute;left:1781.6px;top:1161.6px;width:177.80000000000018px;height:44.7px;box-sizing:border-box;border:1.5px solid #eceef2;border-radius:22px;background:#fff;box-shadow:0 1px 2px rgba(0,0,0,0.05);"></div>
<div style="position:absolute;left:1803.5px;top:1175.4px;width:16.6px;height:16.6px;background:#e36a4a;border-radius:50%;"></div>
<div style="position:absolute;left:1834.00px;top:1173.60px;font-size:22.09px;line-height:22.09px;font-weight:400;color:#e36a4a;letter-spacing:-0.035px;white-space:pre;-webkit-text-stroke:0.35px currentColor;">Net assets</div>
<div style="position:absolute;left:1574.4px;top:1233px;width:919.6px;height:400px;box-sizing:border-box;border:1.5px solid #eef0f3;border-radius:28px;background:#fcfcfd;"></div>
<div style="position:absolute;left:1617.60px;top:1266.57px;font-size:15.51px;line-height:15.51px;font-weight:400;color:#6b7280;letter-spacing:0.540px;white-space:pre;">£30m</div>
<div style="position:absolute;left:1604.40px;top:1336.77px;font-size:15.51px;line-height:15.51px;font-weight:400;color:#6b7280;letter-spacing:0.379px;white-space:pre;">£22.5m</div>
<div style="position:absolute;left:1621.40px;top:1406.97px;font-size:15.51px;line-height:15.51px;font-weight:400;color:#6b7280;letter-spacing:-0.727px;white-space:pre;">£15m</div>
<div style="position:absolute;left:1616.30px;top:1477.07px;font-size:15.51px;line-height:15.51px;font-weight:400;color:#6b7280;letter-spacing:-0.348px;white-space:pre;">£7.5m</div>
<svg style="position:absolute;left:1679.5px;top:1233px;" width="772" height="290" viewBox="0 0 772 290"><line x1="0" x2="770" y1="40.5" y2="40.5" stroke="#e5e7eb" stroke-width="1.5" stroke-dasharray="4 4"/><line x1="0" x2="770" y1="110.70000000000005" y2="110.70000000000005" stroke="#e5e7eb" stroke-width="1.5" stroke-dasharray="4 4"/><line x1="0" x2="770" y1="180.9000000000001" y2="180.9000000000001" stroke="#e5e7eb" stroke-width="1.5" stroke-dasharray="4 4"/><line x1="0" x2="770" y1="251" y2="251" stroke="#e5e7eb" stroke-width="1.5" stroke-dasharray="4 4"/><path d="M38.700000000000045,367 V80.40000000000009 a8,8 0 0 1 8,-8 h19.8 a8,8 0 0 1 8,8 V367 Z" fill="#264653"/><path d="M232.20000000000005,367 V55.700000000000045 a8,8 0 0 1 8,-8 h19.8 a8,8 0 0 1 8,8 V367 Z" fill="#264653"/><path d="M425.8000000000002,367 V77 a8,8 0 0 1 8,-8 h19.8 a8,8 0 0 1 8,8 V367 Z" fill="#264653"/><path d="M619.3000000000002,367 V72.70000000000005 a8,8 0 0 1 8,-8 h19.8 a8,8 0 0 1 8,8 V367 Z" fill="#264653"/><path d="M118.29999999999995,367 V208.9000000000001 a8,8 0 0 1 8,-8 h19.8 a8,8 0 0 1 8,8 V367 Z" fill="#e76f51"/><path d="M311.79999999999995,367 V187.5999999999999 a8,8 0 0 1 8,-8 h19.8 a8,8 0 0 1 8,8 V367 Z" fill="#e76f51"/><path d="M505.3000000000002,367 V195.29999999999995 a8,8 0 0 1 8,-8 h19.8 a8,8 0 0 1 8,8 V367 Z" fill="#e76f51"/><path d="M698.9000000000001,367 V232.29999999999995 a8,8 0 0 1 8,-8 h19.8 a8,8 0 0 1 8,8 V367 Z" fill="#e76f51"/></svg>
</body></html>
